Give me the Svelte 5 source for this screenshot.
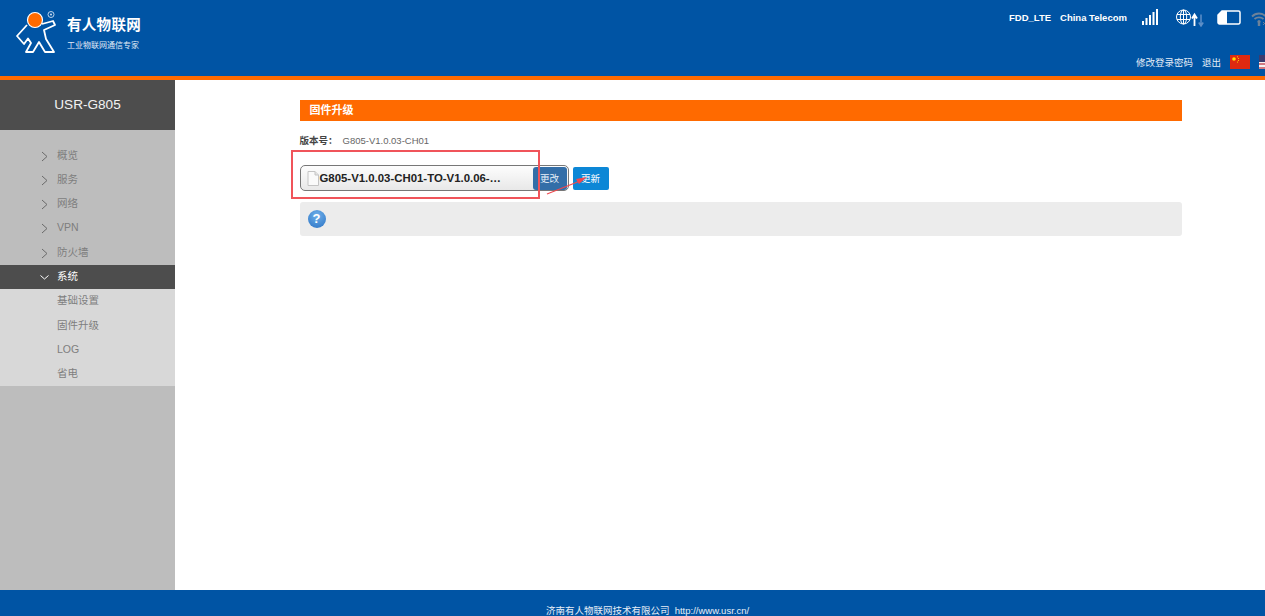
<script>
    const menu = ["概览", "服务", "网络", "VPN", "防火墙"];
    const subMenu = ["基础设置", "固件升级", "LOG", "省电"];
</script>

<div class="page">
    <header>
        <div class="brand">
            <svg class="logo" width="44" height="44" viewBox="0 0 44 44">
                <path d="M11 15 L1 26 L8 34 L12 28.500 L15 33 L10 42 L17 42 L23 32 L29 42 L38 42 L30 29 L28 20 L39 15 L37 11 L26 14" fill="none" stroke="#fff" stroke-width="1.800" stroke-linejoin="round" />
                <circle cx="19" cy="10" r="7.500" fill="#ff6a00" stroke="#fff" stroke-width="1.200" />
                <circle cx="35" cy="4.500" r="3" fill="none" stroke="#cfe0f2" stroke-width="0.900" />
                <circle cx="35" cy="4.500" r="1" fill="#cfe0f2" />
            </svg>
            <div class="brand-text">
                <div class="brand-name">有人物联网</div>
                <div class="brand-sub">工业物联网通信专家</div>
            </div>
        </div>
        <div class="status">
            <div class="status-top">
                <span class="net">FDD_LTE</span>
                <span class="net carrier">China Telecom</span>
                <svg class="signal" width="17" height="17" viewBox="0 0 17 17">
                    <rect x="0" y="12" width="2" height="4" fill="#fff" />
                    <rect x="3.500" y="9" width="2" height="7" fill="#fff" />
                    <rect x="7" y="6" width="2" height="10" fill="#fff" />
                    <rect x="10.500" y="3" width="2" height="13" fill="#fff" />
                    <rect x="14" y="0" width="2" height="16" fill="#fff" />
                </svg>
                <svg class="globe" width="28" height="18" viewBox="0 0 28 18">
                    <g fill="none" stroke="#fff" stroke-width="1">
                        <circle cx="7.500" cy="8" r="7" />
                        <ellipse cx="7.500" cy="8" rx="3.200" ry="7" />
                        <path d="M7.500 1V15M1 5.500H14M1 10.500H14" />
                    </g>
                    <path d="M18.500 17V6M16 9.500L18.500 5.500L21 9.500" fill="none" stroke="#fff" stroke-width="1.800" />
                    <path d="M25 5.500V16M22.800 13.500L25 17L27.200 13.500" fill="none" stroke="#5d8fc7" stroke-width="1.500" />
                </svg>
                <svg class="battery" width="24" height="15" viewBox="0 0 24 15">
                    <path d="M5 1H21.500A1.500 1.500 0 0 1 23 2.500V12.500A1.500 1.500 0 0 1 21.500 14H2.500A1.500 1.500 0 0 1 1 12.500V5Z" fill="none" stroke="#fff" stroke-width="1.500" />
                    <path d="M5 1H10V14H1V5Z" fill="#fff" />
                </svg>
                <svg class="wifi" width="18" height="16" viewBox="0 0 18 16">
                    <g fill="none" stroke="#6d8299" stroke-width="1.800">
                        <path d="M1 5.500C5 1.500 11 1.500 15 5.500" />
                        <path d="M3.500 8C6 5.800 10 5.800 12.500 8" />
                    </g>
                    <circle cx="8" cy="10.500" r="1.600" fill="#6d8299" />
                    <rect x="6.800" y="11" width="2.400" height="4" fill="#6d8299" />
                    <path d="M12 11L15 14M15 11L12 14" stroke="#6d8299" stroke-width="1" />
                </svg>
            </div>
            <div class="status-bottom">
                <span>修改登录密码</span>
                <span>退出</span>
                <svg class="flag" width="20" height="14" viewBox="0 0 20 14">
                    <rect width="20" height="14" fill="#de2910" />
                    <circle cx="4" cy="4" r="1.800" fill="#ffde00" />
                    <circle cx="7.500" cy="1.800" r="0.600" fill="#ffde00" />
                    <circle cx="8.500" cy="3.500" r="0.600" fill="#ffde00" />
                    <circle cx="8.500" cy="5.500" r="0.600" fill="#ffde00" />
                    <circle cx="7.500" cy="7" r="0.600" fill="#ffde00" />
                </svg>
                <svg class="flag" width="20" height="14" viewBox="0 0 20 14">
                    <rect width="20" height="14" fill="#f4f4f4" />
                    <path d="M0 1H20M0 5H20M0 9H20M0 13H20" stroke="#c8505a" stroke-width="1.500" />
                    <rect width="9" height="7" fill="#3c3b6e" />
                </svg>
            </div>
        </div>
    </header>

    <div class="body">
        <aside>
            <div class="device">USR-G805</div>
            <ul class="menu">
                {#each menu as item}
                    <li>
                        <svg class="chev" width="7" height="11" viewBox="0 0 7 11"><path d="M1 1L6 5.500L1 10" fill="none" stroke="#6a6a6a" stroke-width="1" /></svg>
                        {item}
                    </li>
                {/each}
                <li class="active">
                    <svg class="chev down" width="11" height="7" viewBox="0 0 11 7"><path d="M1.500 1.500L5.500 5L9.500 1.500" fill="none" stroke="#fff" stroke-width="1" /></svg>
                    系统
                </li>
            </ul>
            <ul class="submenu">
                {#each subMenu as item}
                    <li>{item}</li>
                {/each}
            </ul>
        </aside>

        <main>
            <h2>固件升级</h2>
            <div class="version"><b>版本号：</b><span>G805-V1.0.03-CH01</span></div>
            <div class="upload-row">
                <div class="file-input">
                    <svg class="file-icon" width="12" height="15" viewBox="0 0 12 15">
                        <path d="M1 .5H8L11.500 4V14.500H1Z" fill="#fafafa" stroke="#c4c4c4" />
                        <path d="M8 .5V4H11.500" fill="#e4e4e4" stroke="#c4c4c4" />
                    </svg>
                    <span class="file-name">G805-V1.0.03-CH01-TO-V1.0.06-…</span>
                    <span class="change">更改</span>
                </div>
                <span class="update">更新</span>
            </div>
            <div class="help">
                <span class="help-icon">?</span>
            </div>

            <div class="red-box"></div>
            <svg class="arrow" width="44" height="22" viewBox="0 0 44 22">
                <path d="M1 20L34 7" stroke="#f0484e" stroke-width="1.200" />
                <path d="M41 3L30 5L33 10Z" fill="#f0484e" />
            </svg>
        </main>
    </div>

    <footer>济南有人物联网技术有限公司&nbsp;&nbsp;http://www.usr.cn/</footer>
</div>

<style>
    :global(body) {
        margin: 0;
        overflow: hidden;
    }

    * {
        box-sizing: border-box;
    }

    .page {
        width: 1265px;
        height: 616px;
        overflow: hidden;
        display: flex;
        flex-direction: column;
        font-family: "Liberation Sans", "Noto Sans CJK SC", sans-serif;
        background: #fff;
    }

    /* header */
    header {
        flex: none;
        height: 80px;
        background: #0054a4;
        border-bottom: 4px solid #ff6a00;
        display: flex;
        justify-content: space-between;
        color: #fff;
    }

    .brand {
        display: flex;
        padding: 10px 0 0 16px;
        gap: 7px;
    }

    .brand-text {
        padding-top: 5px;
    }

    .brand-name {
        font-size: 14.500px;
        font-weight: 700;
        letter-spacing: 0.300px;
        line-height: 20px;
    }

    .brand-sub {
        margin-top: 6px;
        font-size: 8px;
        line-height: 10px;
        color: #e2ecf7;
    }

    .status {
        display: flex;
        flex-direction: column;
        width: 256px;
        flex: none;
        overflow: hidden;
    }

    .status-top {
        display: flex;
        align-items: center;
        height: 20px;
        margin-top: 7px;
        width: 271px;
    }

    .net {
        font-size: 9.500px;
        font-weight: 700;
        white-space: nowrap;
    }

    .carrier {
        margin-left: 9px;
    }

    .signal {
        margin-left: 15px;
    }

    .globe {
        margin-left: 17px;
        margin-top: 2px;
    }

    .battery {
        margin-left: 13px;
        margin-top: 1px;
    }

    .wifi {
        margin-left: 10px;
        margin-top: 3px;
    }

    .status-bottom {
        display: flex;
        align-items: center;
        gap: 9px;
        margin-top: 27px;
        height: 16px;
        width: 271px;
        padding-left: 127px;
        font-size: 9.500px;
        white-space: nowrap;
        color: #e6eef7;
    }

    .flag {
        flex: none;
    }

    /* sidebar */
    .body {
        flex: 1;
        display: flex;
        min-height: 0;
    }

    aside {
        width: 175px;
        flex: none;
        background: #bdbdbd;
    }

    .device {
        height: 50px;
        background: #4d4d4d;
        color: #f2f2f2;
        font-size: 13.600px;
        line-height: 49px;
        text-align: center;
    }

    ul {
        list-style: none;
        margin: 0;
        padding: 0;
    }

    .menu {
        padding-top: 13.500px;
    }

    li {
        height: 24.300px;
        line-height: 23px;
        font-size: 10.500px;
        color: #7e7e7e;
        padding-left: 57px;
        position: relative;
    }

    .chev {
        position: absolute;
        left: 41px;
        top: 7px;
    }

    .chev.down {
        left: 39px;
        top: 9px;
    }

    .active {
        background: #4d4d4d;
        color: #fff;
    }

    .submenu {
        background: #d8d8d8;
    }

    /* main */
    main {
        flex: 1;
        position: relative;
        padding: 20px 83px 0 124.500px;
    }

    h2 {
        margin: 0;
        height: 21px;
        background: #ff6a00;
        color: #fff;
        font-size: 11px;
        line-height: 20px;
        padding-left: 10px;
    }

    .version {
        margin-top: 13px;
        font-size: 9.500px;
        line-height: 14px;
        color: #666;
    }

    .version b {
        color: #444;
        display: inline-block;
        width: 43px;
    }

    .upload-row {
        margin-top: 17px;
        display: flex;
        align-items: center;
        gap: 4px;
    }

    .file-input {
        width: 269px;
        height: 26px;
        border: 1px solid #777;
        border-radius: 5px;
        background: linear-gradient(#fdfdfd, #e8e8e8);
        display: flex;
        align-items: center;
        padding: 0 1px 0 6px;
    }

    .file-name {
        flex: 1;
        margin-left: 1px;
        font-size: 11.400px;
        font-weight: 700;
        color: #222;
        white-space: nowrap;
    }

    .change {
        width: 34px;
        height: 23px;
        background: #336ea8;
        border-radius: 3px;
        color: #e8f0f8;
        font-size: 9.500px;
        line-height: 23px;
        text-align: center;
    }

    .update {
        width: 36px;
        height: 23px;
        background: #0c87d6;
        border-radius: 2px;
        color: #fff;
        font-size: 9.500px;
        line-height: 23px;
        text-align: center;
    }

    .help {
        margin-top: 11px;
        height: 34px;
        background: #ececec;
        border-radius: 3px;
        display: flex;
        align-items: center;
        padding-left: 8px;
    }

    .help-icon {
        width: 18px;
        height: 18px;
        border-radius: 50%;
        background: radial-gradient(circle at 50% 30%, #6fb0ea, #2a72c4);
        color: #fff;
        font-size: 13px;
        font-weight: 700;
        line-height: 18px;
        text-align: center;
    }

    /* annotations drawn over the screenshot */
    .red-box {
        position: absolute;
        left: 116px;
        top: 70px;
        width: 249px;
        height: 49px;
        border: 2px solid #f0545a;
    }

    .arrow {
        position: absolute;
        left: 371px;
        top: 94px;
    }

    /* footer */
    footer {
        flex: none;
        height: 26px;
        background: #0054a4;
        color: #e6eef7;
        font-size: 9.500px;
        line-height: 14px;
        padding: 14px 0 0 30px;
        text-align: center;
        white-space: nowrap;
    }
</style>
